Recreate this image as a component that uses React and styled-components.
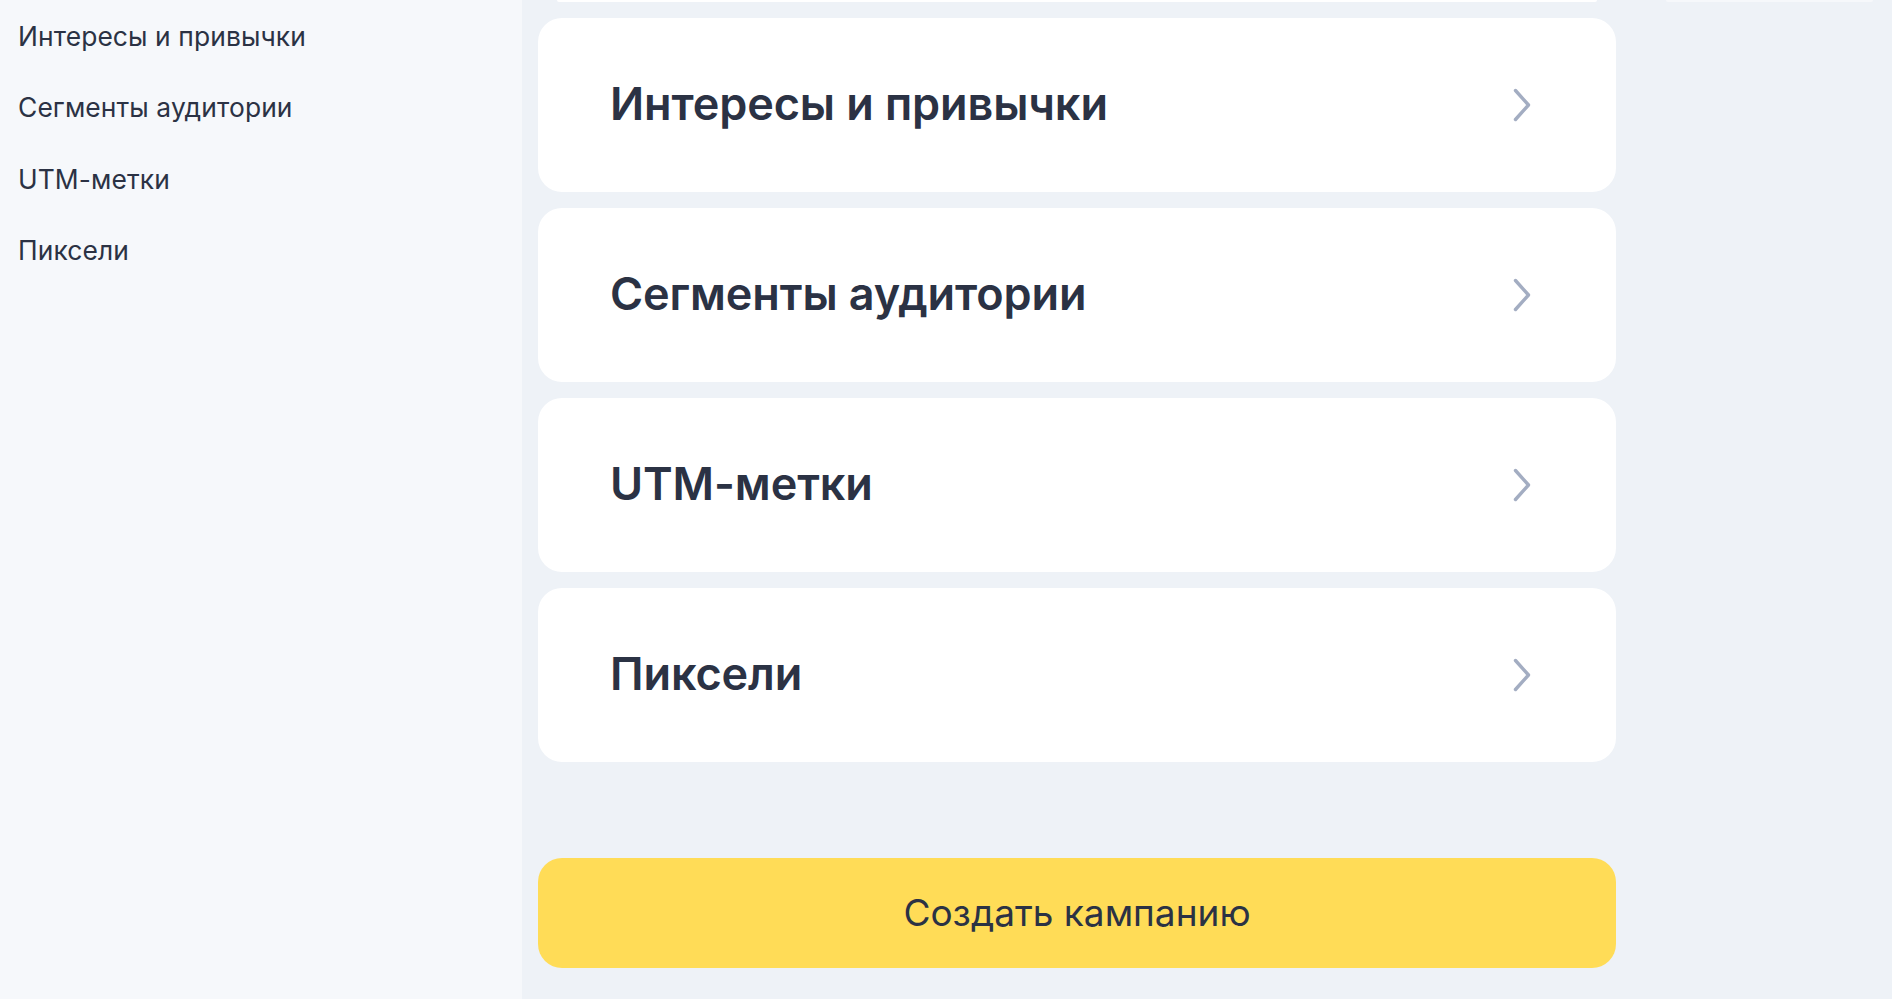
import styled, { createGlobalStyle } from 'styled-components';

const GlobalStyle = createGlobalStyle`
  html, body {
    margin: 0;
    padding: 0;
    background: #eef2f7;
    font-family: Inter, "Noto Sans", "Open Sans", sans-serif;
    color: #2b3244;
  }
  * {
    box-sizing: border-box;
  }
`;

const Layout = styled.div`
  display: grid;
  grid-template-columns: 522px 1fr;
  height: 999px;
  overflow: hidden;
`;

const Sidebar = styled.aside`
  background: #f6f8fb;
`;

const NavList = styled.ul`
  list-style: none;
  margin: 0;
  padding: 0;
`;

const NavItem = styled.li`
  height: 71.5px;
  display: flex;
  align-items: center;
  padding-left: 18px;
  font-size: 26.4px;
  letter-spacing: 0.1px;
  color: #2b3244;
  cursor: pointer;
`;

const Main = styled.main`
  display: grid;
  grid-template-columns: 1078px 245px;
  column-gap: 31px;
  padding-left: 16px;
`;

const Column = styled.div`
  display: flex;
  flex-direction: column;
`;

const Peek = styled.div`
  height: 2px;
  margin: 0 ${p => p.$inset || 19}px;
  background: ${p => p.$tone || '#ffffff'};
  border-radius: 0 0 24px 24px;
`;

const CardList = styled.div`
  display: flex;
  flex-direction: column;
  gap: 16px;
  margin-top: 16px;
`;

const Card = styled.a`
  height: 174px;
  display: flex;
  align-items: center;
  justify-content: space-between;
  padding: 0 85px 0 72px;
  background: #ffffff;
  border-radius: 24px;
  text-decoration: none;
  color: #2b3244;
  cursor: pointer;
`;

const CardTitle = styled.span`
  font-size: 45px;
  font-weight: 600;
  letter-spacing: -0.1px;
  padding-bottom: 4px;
`;

const Chevron = styled.svg`
  width: 18px;
  height: 34px;
  flex: none;
`;

const CreateButton = styled.button`
  margin-top: 96px;
  height: 110px;
  padding-bottom: 2px;
  border: none;
  border-radius: 24px;
  background: #ffdc57;
  color: #2b3244;
  font-family: inherit;
  font-size: 37px;
  font-weight: 400;
  cursor: pointer;
`;

const sections = [
  'Интересы и привычки',
  'Сегменты аудитории',
  'UTM-метки',
  'Пиксели',
];

export default function App() {
  return (
    <>
      <GlobalStyle />
      <Layout>
        <Sidebar>
          <NavList>
            {sections.map(name => (
              <NavItem key={name}>{name}</NavItem>
            ))}
          </NavList>
        </Sidebar>
        <Main>
          <Column>
            <Peek />
            <CardList>
              {sections.map(name => (
                <Card key={name}>
                  <CardTitle>{name}</CardTitle>
                  <Chevron viewBox="0 0 18 34" fill="none">
                    <path
                      d="M2.5 2.5 L15.5 17 L2.5 31.5"
                      stroke="#a3adc2"
                      strokeWidth="3.4"
                      strokeLinecap="round"
                      strokeLinejoin="round"
                    />
                  </Chevron>
                </Card>
              ))}
            </CardList>
            <CreateButton type="button">Создать кампанию</CreateButton>
          </Column>
          <Column>
            <Peek $inset={0} $tone="#f6f8fb" />
          </Column>
        </Main>
      </Layout>
    </>
  );
}
